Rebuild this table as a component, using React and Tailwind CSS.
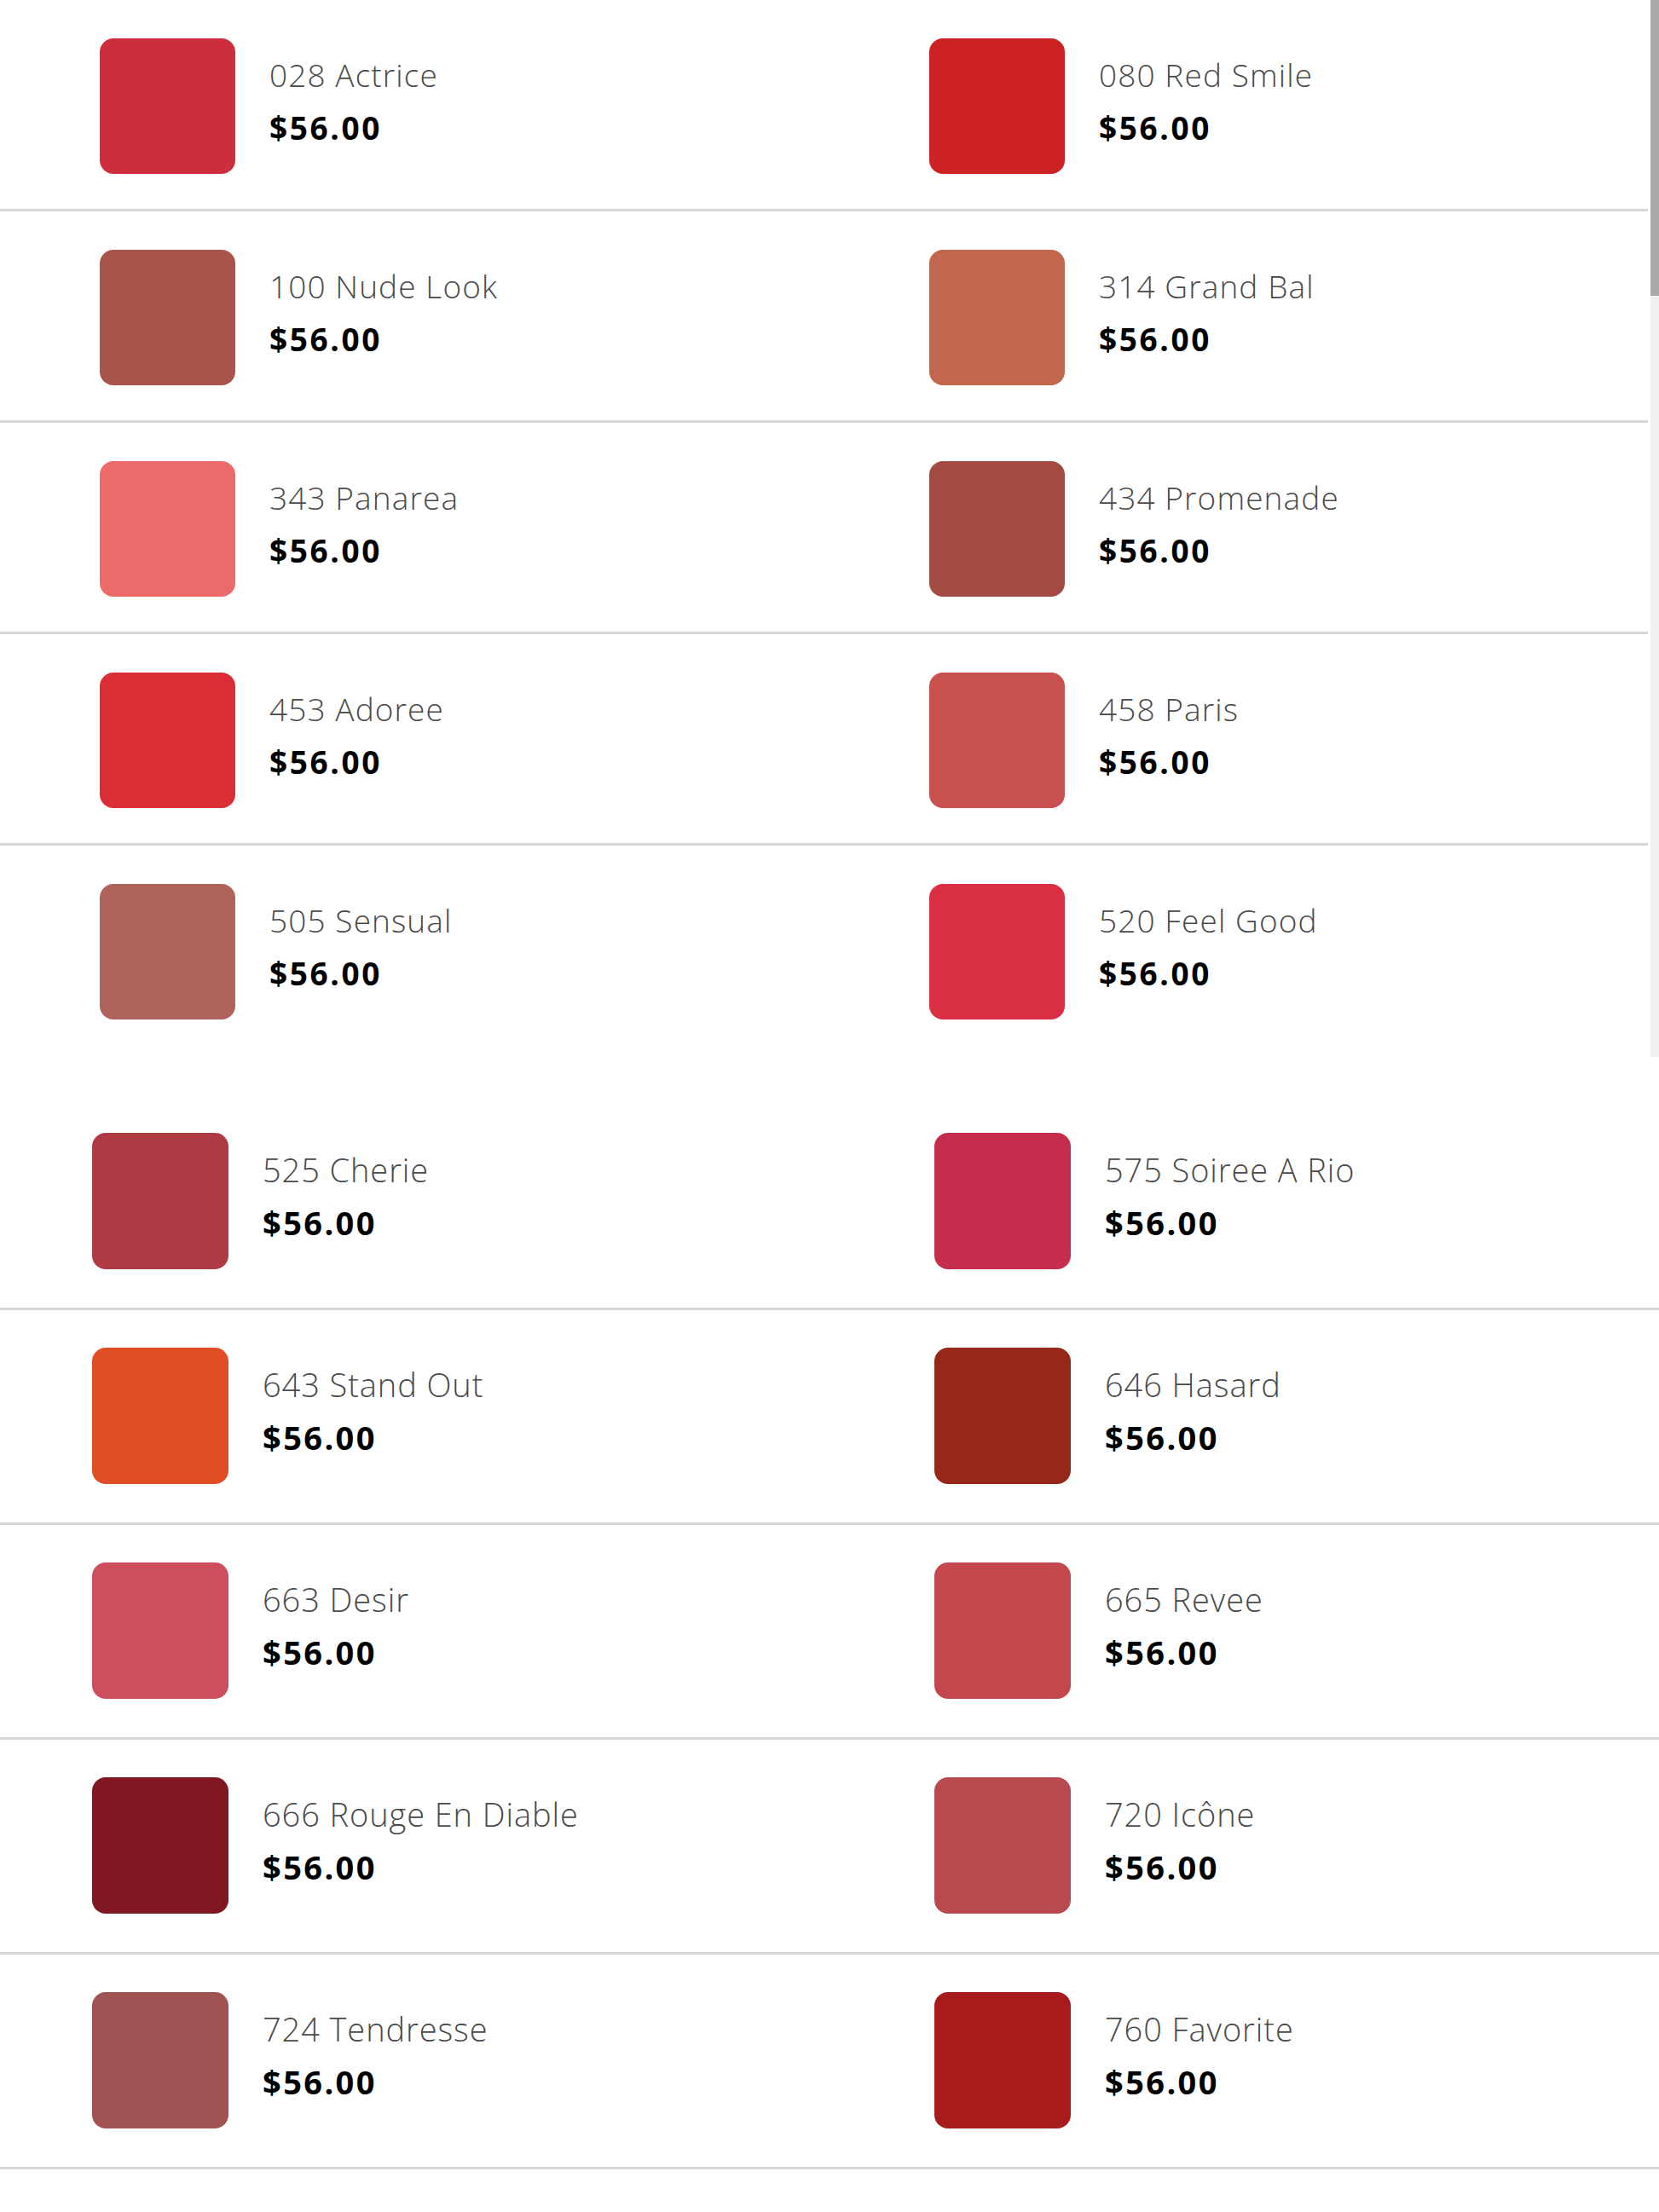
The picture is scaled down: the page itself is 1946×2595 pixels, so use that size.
const topShades = [
  ['028 Actrice', '#ce2e3c', '080 Red Smile', '#cc2224'],
  ['100 Nude Look', '#a8544a', '314 Grand Bal', '#c0674d'],
  ['343 Panarea', '#ec6a6a', '434 Promenade', '#a34a42'],
  ['453 Adoree', '#db2d35', '458 Paris', '#c8504f'],
  ['505 Sensual', '#b0635d', '520 Feel Good', '#da2e43'],
]

const bottomShades = [
  ['525 Cherie', '#b03a44', '575 Soiree A Rio', '#c42e4c'],
  ['643 Stand Out', '#e04d25', '646 Hasard', '#962819'],
  ['663 Desir', '#cd4f5e', '665 Revee', '#c5474e'],
  ['666 Rouge En Diable', '#7f1820', '720 Icône', '#b84a4f'],
  ['724 Tendresse', '#a05352', '760 Favorite', '#a81b1d'],
]

function Shade({ name, color, big }) {
  return (
    <div className="flex items-start gap-[40px]">
      <div
        className={big ? 'w-[160px] h-[160px] rounded-[16px] shrink-0' : 'w-[159px] h-[159px] rounded-[16px] shrink-0'}
        style={{ backgroundColor: color }}
      />
      <div className="flex flex-col pt-[21px]">
        <span className={big ? 'text-[38px] leading-[44px] font-light tracking-[0.9px] text-[#4a4a4a]' : 'text-[37px] leading-[44px] font-light tracking-[1.1px] text-[#4a4a4a]'}>
          {name}
        </span>
        <span className={big ? 'mt-[18px] text-[38px] leading-[44px] font-bold tracking-[2.4px] text-black' : 'mt-[18px] text-[37px] leading-[44px] font-bold tracking-[2.6px] text-black'}>
          $56.00
        </span>
      </div>
    </div>
  )
}

export default function App() {
  return (
    <div className="w-[1946px] min-h-[2595px] bg-white font-['Open_Sans',sans-serif]">
      {/* scrolled panel with its own scrollbar */}
      <div className="flex">
        <div className="w-[1933px]">
          {topShades.map(([a, ca, b, cb], i) => (
            <div
              key={a}
              className={
                i < topShades.length - 1
                  ? 'h-[248px] grid grid-cols-[973px_1fr] pl-[117px] pt-[45px] border-b-[3px] border-[#d6d6d6]'
                  : 'h-[248px] grid grid-cols-[973px_1fr] pl-[117px] pt-[45px]'
              }
            >
              <Shade name={a} color={ca} />
              <Shade name={b} color={cb} />
            </div>
          ))}
        </div>
        <div className="ml-[3px] w-[10px] h-[1240px] bg-[#f0f0f0] flex flex-col">
          <div className="h-[347px] bg-[#a9a9a9]" />
        </div>
      </div>

      {/* rest of the list */}
      <div className="mt-[45px]">
        {bottomShades.map(([a, ca, b, cb]) => (
          <div
            key={a}
            className="h-[252px] grid grid-cols-[988px_1fr] pl-[108px] pt-[44px] border-b-[3px] border-[#d6d6d6]"
          >
            <Shade name={a} color={ca} big />
            <Shade name={b} color={cb} big />
          </div>
        ))}
      </div>
    </div>
  )
}
